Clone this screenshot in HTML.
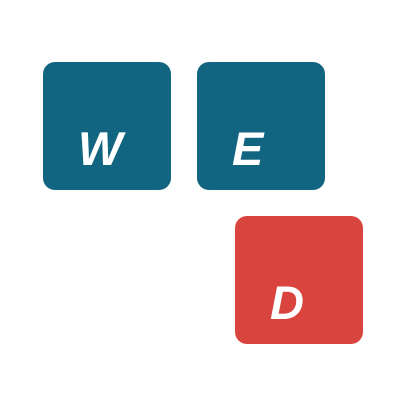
<!DOCTYPE html>
<html><head><style>
body{margin:0;width:400px;height:400px;background:#fff;position:relative;overflow:hidden}
.k{position:absolute;width:128px;height:128px;border-radius:12px;font-family:"Liberation Sans",sans-serif;font-weight:bold;font-style:italic;font-size:47px;color:#fff;line-height:1}
.k span{position:absolute;top:63px}
.b{background:#126580}
.r{background:#d9443e}
</style></head><body>
<div class="k b" style="left:43px;top:62px"><span style="left:35px">W</span></div>
<div class="k b" style="left:197px;top:62px"><span style="left:35px">E</span></div>
<div class="k r" style="left:235px;top:216px"><span style="left:35px">D</span></div>
</body></html>
